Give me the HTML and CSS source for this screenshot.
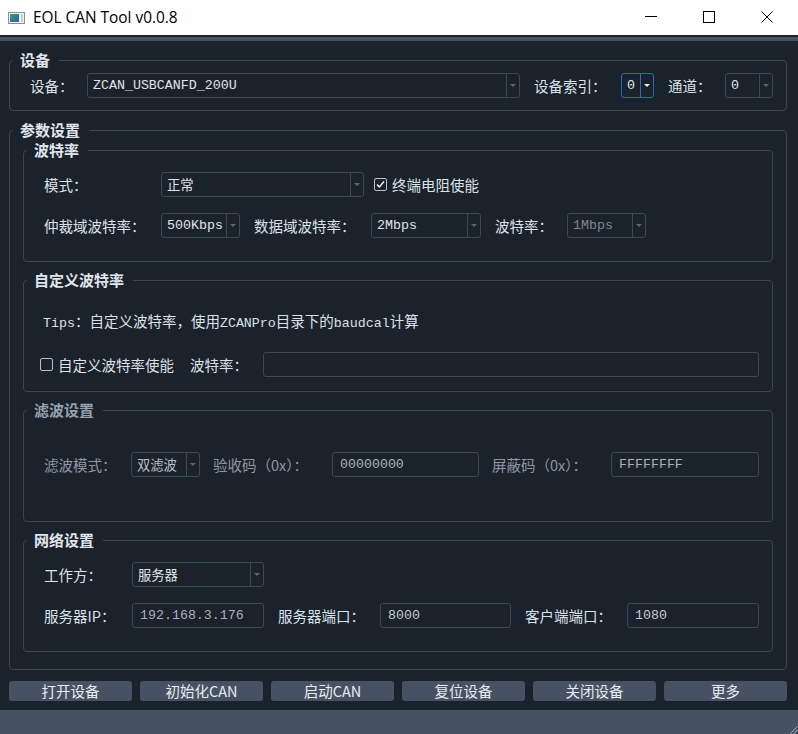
FILE: index.html
```html
<!DOCTYPE html>
<html lang="zh-CN">
<head>
<meta charset="utf-8">
<title>EOL CAN Tool v0.0.8</title>
<link rel="stylesheet" href="styles.css">
</head>
<body>
<header class="titlebar">
  <svg class="app-icon" width="17" height="12" viewBox="0 0 17 12">
    <defs>
      <linearGradient id="ig" x1="0" y1="0" x2="1" y2="1">
        <stop offset="0" stop-color="#3f9a78"/>
        <stop offset="1" stop-color="#2f5fa8"/>
      </linearGradient>
    </defs>
    <rect x="0.5" y="0.5" width="16" height="11" fill="#f4f4f4" stroke="#8a9096"/>
    <rect x="2" y="2" width="9" height="8" fill="url(#ig)"/>
    <rect x="13" y="2" width="2" height="8" fill="#c9cdd1"/>
  </svg>
  <span class="title">EOL CAN Tool v0.0.8</span>
  <div class="winctl">
    <span class="wbtn"><svg width="12" height="12" viewBox="0 0 12 12"><path d="M0 5.5H12" stroke="#000" stroke-width="1"/></svg></span>
    <span class="wbtn"><svg width="12" height="12" viewBox="0 0 12 12"><rect x="0.5" y="0.5" width="11" height="11" fill="none" stroke="#000" stroke-width="1"/></svg></span>
    <span class="wbtn"><svg width="12" height="12" viewBox="0 0 12 12"><path d="M0.5 0.5L11.5 11.5M11.5 0.5L0.5 11.5" stroke="#000" stroke-width="1"/></svg></span>
  </div>
</header>
<div class="strip"></div>

<main class="main">
  <fieldset class="group g-device">
    <legend>设备</legend>
    <div class="row">
      <span class="lbl dev-lbl">设备：</span>
      <div class="combo dev-combo"><span class="val">ZCAN_USBCANFD_200U</span><span class="arrow"></span></div>
      <span class="lbl idx-lbl">设备索引：</span>
      <div class="combo idx-combo focus"><span class="val">0</span><span class="arrow"></span></div>
      <span class="lbl ch-lbl">通道：</span>
      <div class="combo ch-combo"><span class="val">0</span><span class="arrow"></span></div>
    </div>
  </fieldset>

  <fieldset class="group g-params">
    <legend>参数设置</legend>
    <div class="params-body">
      <fieldset class="group sub g-baud">
        <legend>波特率</legend>
        <div class="row">
          <span class="lbl baud-lbl">模式：</span>
          <div class="combo mode-combo"><span class="val">正常</span><span class="arrow"></span></div>
          <span class="check term-check"><span class="box checked"><svg width="9" height="9" viewBox="0 0 9 9"><path d="M1 4.6L3.4 7L8 1.6" fill="none" stroke="#f2f4f6" stroke-width="1.5"/></svg></span>终端电阻使能</span>
        </div>
        <div class="row row-gap">
          <span class="lbl baud-lbl">仲裁域波特率：</span>
          <div class="combo arb-combo"><span class="val">500Kbps</span><span class="arrow"></span></div>
          <span class="lbl data-lbl">数据域波特率：</span>
          <div class="combo data-combo"><span class="val">2Mbps</span><span class="arrow"></span></div>
          <span class="lbl rate-lbl">波特率：</span>
          <div class="combo rate-combo disabled"><span class="val">1Mbps</span><span class="arrow"></span></div>
        </div>
      </fieldset>

      <fieldset class="group sub g-custom">
        <legend>自定义波特率</legend>
        <p class="tips"><span class="mono">Tips</span>：自定义波特率，使用<span class="mono">ZCANPro</span>目录下的<span class="mono">baudcal</span>计算</p>
        <div class="row">
          <span class="check custom-check"><span class="box"></span>自定义波特率使能</span>
          <span class="lbl custom-lbl">波特率：</span>
          <div class="field custom-field"></div>
        </div>
      </fieldset>

      <fieldset class="group sub g-filter">
        <legend>滤波设置</legend>
        <div class="row">
          <span class="lbl fmode-lbl">滤波模式：</span>
          <div class="combo fmode-combo"><span class="val">双滤波</span><span class="arrow"></span></div>
          <span class="lbl code-lbl">验收码（0x）：</span>
          <div class="field code-field"><span class="val">00000000</span></div>
          <span class="lbl code-lbl">屏蔽码（0x）：</span>
          <div class="field mask-field"><span class="val">FFFFFFFF</span></div>
        </div>
      </fieldset>

      <fieldset class="group sub g-net">
        <legend>网络设置</legend>
        <div class="row">
          <span class="lbl net-lbl">工作方：</span>
          <div class="combo work-combo"><span class="val">服务器</span><span class="arrow"></span></div>
        </div>
        <div class="row row-gap">
          <span class="lbl net-lbl">服务器IP：</span>
          <div class="field ip-field"><span class="val">192.168.3.176</span></div>
          <span class="lbl port-lbl">服务器端口：</span>
          <div class="field sport-field"><span class="val">8000</span></div>
          <span class="lbl port-lbl">客户端端口：</span>
          <div class="field cport-field"><span class="val">1080</span></div>
        </div>
      </fieldset>
    </div>
  </fieldset>

  <div class="buttons">
    <button class="btn">打开设备</button>
    <button class="btn">初始化CAN</button>
    <button class="btn">启动CAN</button>
    <button class="btn">复位设备</button>
    <button class="btn">关闭设备</button>
    <button class="btn">更多</button>
  </div>
</main>

<footer class="statusbar">
  <svg class="grip" width="10" height="10" viewBox="0 0 10 10">
    <path d="M9.5 2.5L2.5 9.5M9.5 6L6 9.5" stroke="#aab3bd" stroke-width="1"/>
  </svg>
</footer>
</body>
</html>
```

FILE: styles.css
```css
* { box-sizing: border-box; }

html, body {
  margin: 0;
  padding: 0;
}

body {
  width: 798px;
  height: 734px;
  overflow: hidden;
  background: #1a222c;
  color: #dce1e6;
  font-family: "Noto Sans CJK SC", "Noto Sans", sans-serif;
  font-size: 14.5px;
  display: flex;
  flex-direction: column;
}

/* ---------- title bar ---------- */
.titlebar {
  height: 37px;
  flex: none;
  background: #ffffff;
  border-bottom: 2px solid #1c2128;
  display: flex;
  align-items: center;
  color: #000;
}

.app-icon {
  margin-left: 8px;
  margin-top: 1px;
  flex: none;
}

.title {
  margin-left: 8px;
  font-family: "Open Sans", "Noto Sans", sans-serif;
  font-size: 15.4px;
  margin-top: -1px;
}

.winctl {
  margin-left: auto;
  margin-right: 2px;
  display: flex;
  height: 100%;
}

.wbtn {
  width: 58px;
  display: flex;
  align-items: center;
  justify-content: center;
  padding-bottom: 2px;
}

.strip {
  height: 4px;
  flex: none;
  background: #465263;
}

/* ---------- main ---------- */
.main {
  flex: none;
  padding: 0 11px 0 9px;
}

.group {
  --pl: 0px;
  margin: 0;
  padding: 0 0 0 var(--pl);
  min-width: 0;
  border: 1px solid #3a4553;
  border-radius: 4px;
}

.group > legend {
  margin-left: calc(3px - var(--pl));
  padding: 0 9px 0 7px;
  line-height: 16px;
  font-size: 15px;
  font-weight: bold;
  color: #e1e5ea;
}

.g-device {
  --pl: 20px;
  margin-top: 11px;
  padding-top: 5px;
  padding-bottom: 12px;
}

.g-params {
  margin-top: 11px;
}

.params-body {
  padding: 4px 13px 17px 13px;
}

.sub + .sub {
  margin-top: 10px;
}

.g-baud,
.g-net {
  --pl: 20px;
  padding-top: 14px;
  padding-bottom: 23px;
}

.g-custom {
  --pl: 16px;
  padding-top: 23px;
  padding-right: 13px;
  padding-bottom: 14px;
}

.g-filter {
  --pl: 20px;
  padding-top: 34px;
  padding-bottom: 44px;
}

.g-filter > legend {
  color: #97a1ad;
}

.row {
  display: flex;
  align-items: center;
  height: 25px;
}

.row-gap {
  margin-top: 16px;
}

.lbl {
  flex: none;
  white-space: nowrap;
}

/* ---------- controls ---------- */
.combo,
.field {
  flex: none;
  height: 25px;
  border: 1px solid #3c4756;
  border-radius: 3px;
  display: flex;
  align-items: center;
}

.val {
  font-family: "Liberation Mono", "Noto Sans CJK SC", monospace;
  font-size: 13.3px;
  white-space: nowrap;
  overflow: hidden;
}

.combo .val {
  flex: 1;
  padding-left: 5px;
  color: #e0e4e9;
}

.combo .arrow {
  flex: none;
  width: 13px;
  height: 100%;
  border-left: 1px solid #3c4756;
  display: flex;
  align-items: center;
  justify-content: center;
}

.combo .arrow::after {
  content: "";
  width: 0;
  height: 0;
  border-left: 3px solid transparent;
  border-right: 3px solid transparent;
  border-top: 3px solid #5b6674;
}

.combo.focus {
  border-color: #2a6fb5;
}

.combo.focus .arrow {
  border-left-color: #2a6fb5;
}

.combo.focus .arrow::after {
  border-top-color: #eef1f4;
}

.combo.disabled .val {
  color: #7d8793;
}

.field .val {
  padding-left: 7px;
  color: #c6cbd1;
}

.check {
  display: flex;
  align-items: center;
  white-space: nowrap;
  flex: none;
}

.check .box {
  width: 13px;
  height: 13px;
  border: 1px solid #b9c0c8;
  border-radius: 2px;
  margin-right: 5px;
  display: flex;
  align-items: center;
  justify-content: center;
}

/* device row */
.dev-lbl { width: 57px; }
.dev-combo { width: 433px; }
.idx-lbl { width: 87px; margin-left: 14px; }
.idx-combo { width: 33px; }
.ch-lbl { width: 57px; margin-left: 14px; }
.ch-combo { width: 48px; }

/* baud rows */
.baud-lbl { width: 117px; }
.mode-combo { width: 203px; }
.term-check { margin-left: 10px; }
.arb-combo { width: 79px; }
.data-lbl { width: 117px; margin-left: 14px; }
.data-combo { width: 110px; }
.rate-lbl { width: 72px; margin-left: 14px; }
.rate-combo { width: 79px; }

/* custom */
.tips {
  margin: 0 0 21px 0;
  padding-left: 3px;
  line-height: 20px;
  height: 20px;
  white-space: nowrap;
}

.mono {
  font-family: "Liberation Mono", monospace;
  font-size: 13.3px;
}

.custom-check { width: 150px; }
.custom-lbl { width: 73px; }
.custom-field { flex: 1; }

/* filter */
.g-filter .lbl { color: #8d97a3; }
.fmode-lbl { width: 87px; }
.fmode-combo { width: 69px; }
.fmode-combo .val { color: #b9bec4; }
.code-lbl { width: 119px; margin-left: 13px; }
.code-field { width: 147px; }
.mask-field { width: 148px; }
.g-filter .field .val { color: #aeb2b6; }

/* network */
.net-lbl { width: 88px; }
.work-combo { width: 132px; }
.ip-field { width: 132px; }
.port-lbl { width: 102px; margin-left: 14px; }
.sport-field { width: 131px; }
.cport-field { width: 132px; }
.ip-field .val { color: #a9b1ba; }

/* ---------- buttons ---------- */
.buttons {
  margin-top: 11px;
  display: grid;
  grid-template-columns: repeat(6, 1fr);
  column-gap: 8px;
}

.btn {
  height: 20px;
  border: none;
  border-radius: 3px;
  background: #465263;
  color: #e8ecf0;
  font-family: "Noto Sans CJK SC", "Noto Sans", sans-serif;
  font-size: 14.5px;
  line-height: 20px;
  padding: 0;
}

/* ---------- status bar ---------- */
.statusbar {
  margin-top: auto;
  height: 24px;
  flex: none;
  background: #465263;
  display: flex;
  justify-content: flex-end;
  align-items: flex-end;
}

.grip {
  display: block;
}
```
